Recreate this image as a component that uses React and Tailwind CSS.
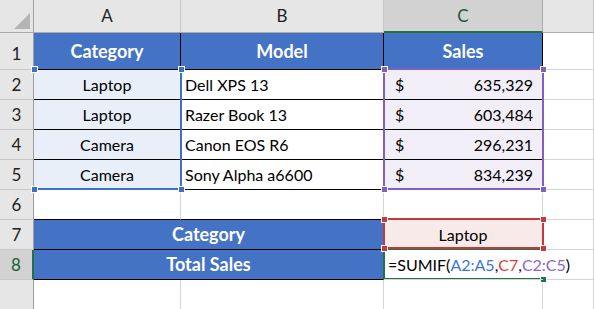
import React from "react";

const grid = "border-r border-b border-[#d4d4d4]";
const blk = "border-r border-b border-black";
const blueHead = "flex items-center justify-center bg-[#4472c4] text-white font-bold text-[18px]";
const colHead = "flex items-center justify-center bg-[#e6e6e6] border-r border-b border-r-[#c8c8c8] border-b-[#ababab] text-[17px] text-[#222]";
const rowHead = "flex items-center justify-center bg-[#e6e6e6] border-r border-b border-r-[#9e9e9e] border-b-[#c8c8c8] text-[17px] text-[#222]";

const rows = [
  { cat: "Laptop", model: "Dell XPS 13", sales: "635,329" },
  { cat: "Laptop", model: "Razer Book 13", sales: "603,484" },
  { cat: "Camera", model: "Canon EOS R6", sales: "296,231" },
  { cat: "Camera", model: "Sony Alpha a6600", sales: "834,239" },
];

const Handle = ({ x, y, color }) => (
  <div
    className={`absolute w-[7px] h-[7px] border border-white ${color}`}
    style={{ left: x - 3, top: y - 3 }}
  />
);

export default function App() {
  return (
    <div className="relative w-[594px] h-[309px] overflow-hidden bg-white font-['Lato','Liberation_Sans',sans-serif] text-[16px] text-black">
      <div className="grid grid-cols-[34px_147px_203px_159px_51px] grid-rows-[33px_37px_repeat(8,30px)]">
        {/* column headers */}
        <div className="relative bg-[#e6e6e6] border-r border-b border-r-[#9e9e9e] border-b-[#ababab]">
          <svg className="absolute left-0 top-0" width="34" height="33">
            <polygon points="14,29 30,13 30,29" fill="#b4b4b4" />
          </svg>
        </div>
        <div className={colHead}>A</div>
        <div className={colHead}>B</div>
        <div className="flex items-center justify-center bg-[#d2d2d2] border-r border-r-[#ababab] border-b-2 border-b-[#217346] text-[17px] text-[#185c37]">
          C
        </div>
        <div className={colHead}></div>

        {/* row 1 */}
        <div className={`${rowHead} items-end pb-[3px]`}>1</div>
        <div className={`${blueHead} ${blk}`}>Category</div>
        <div className={`${blueHead} ${blk}`}>Model</div>
        <div className={`${blueHead} ${blk}`}>Sales</div>
        <div className={grid}></div>

        {/* rows 2-5 */}
        {rows.map((r, i) => (
          <React.Fragment key={i}>
            <div className={rowHead}>{i + 2}</div>
            <div className={`flex items-center justify-center bg-[#e9eff8] ${blk}`}>{r.cat}</div>
            <div className={`flex items-center pl-[4px] ${blk}`}>{r.model}</div>
            <div className={`flex items-center justify-between pl-[11px] pr-[9px] bg-[#f1eef8] ${blk}`}>
              <span>$</span>
              <span>{r.sales}</span>
            </div>
            <div className={grid}></div>
          </React.Fragment>
        ))}

        {/* row 6 */}
        <div className={rowHead}>6</div>
        <div className="border-r border-r-[#d4d4d4] border-b border-b-black"></div>
        <div className="border-r border-r-[#d4d4d4] border-b border-b-black"></div>
        <div className={grid}></div>
        <div className={grid}></div>

        {/* row 7 */}
        <div className={rowHead}>7</div>
        <div className={`col-span-2 ${blueHead} ${blk}`}>Category</div>
        <div className={`flex items-center justify-center bg-[#f9eaea] ${grid}`}>Laptop</div>
        <div className={grid}></div>

        {/* row 8 */}
        <div className="flex items-center justify-center bg-[#d2d2d2] border-b border-b-[#c8c8c8] border-r-2 border-r-[#217346] text-[17px] text-[#185c37]">
          8
        </div>
        <div className={`col-span-2 ${blueHead} ${blk}`}>Total Sales</div>
        <div className="relative z-10 flex items-center pl-[4px] whitespace-nowrap overflow-visible border-b border-[#d4d4d4]">
          <span>=SUMIF(</span>
          <span className="text-[#3a78d4]">A2:A5</span>
          <span>,</span>
          <span className="text-[#e0393b]">C7</span>
          <span>,</span>
          <span className="text-[#8a66c9]">C2:C5</span>
          <span>)</span>
        </div>
        <div className={grid}></div>

        {/* row 9 */}
        <div className={rowHead}></div>
        <div className={grid}></div>
        <div className={grid}></div>
        <div className={grid}></div>
        <div className={grid}></div>
      </div>

      {/* reference highlights */}
      <div className="absolute left-[33px] top-[68px] w-[149px] h-[122px] border-r-2 border-b-2 border-[#3f6fc6]" />
      <div className="absolute left-[383px] top-[68px] w-[161px] h-[122px] border-2 border-[#7f5fbf]" />
      <div className="absolute left-[383px] top-[248px] w-[161px] h-[32px] border-l-2 border-t-2 border-b-2 border-[#217346]" />
      <div className="absolute left-[383px] top-[218px] w-[161px] h-[31px] border-2 border-[#c4393b]" />

      <Handle x={34} y={69} color="bg-[#3f6fc6]" />
      <Handle x={181} y={69} color="bg-[#3f6fc6]" />
      <Handle x={34} y={189} color="bg-[#3f6fc6]" />
      <Handle x={181} y={189} color="bg-[#3f6fc6]" />

      <Handle x={384} y={69} color="bg-[#7f5fbf]" />
      <Handle x={543} y={69} color="bg-[#7f5fbf]" />
      <Handle x={384} y={189} color="bg-[#7f5fbf]" />
      <Handle x={543} y={189} color="bg-[#7f5fbf]" />

      <Handle x={543} y={279} color="bg-[#217346]" />

      <Handle x={384} y={219} color="bg-[#c4393b]" />
      <Handle x={543} y={219} color="bg-[#c4393b]" />
      <Handle x={384} y={248} color="bg-[#c4393b]" />
      <Handle x={543} y={248} color="bg-[#c4393b]" />
    </div>
  );
}
